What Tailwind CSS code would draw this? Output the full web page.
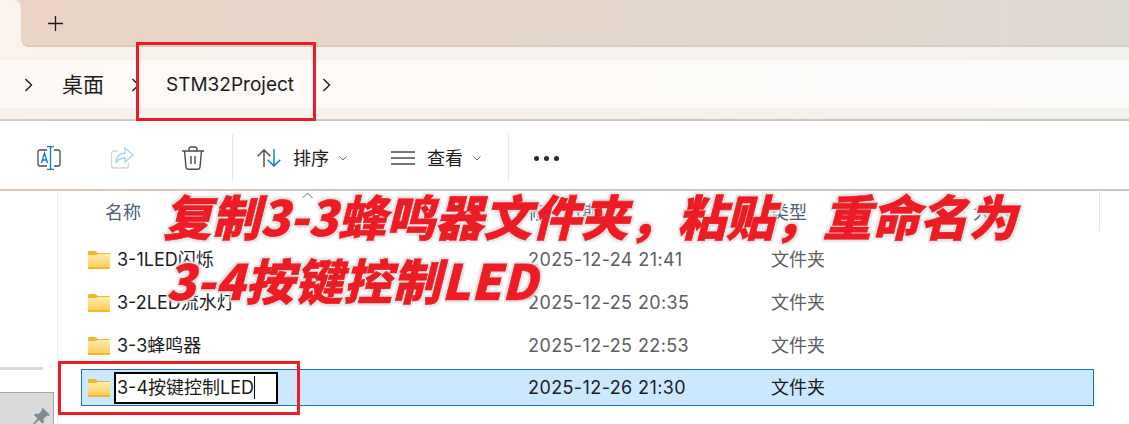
<!DOCTYPE html>
<html lang="zh-CN">
<head>
  <meta charset="UTF-8">
  <title>STM32Project</title>
  <script src="https://cdn.jsdelivr.net/npm/@tailwindcss/browser@4"></script>
</head>
<body class="bg-white overflow-hidden font-['Inter','Noto_Sans_CJK_SC',sans-serif]">
  <div class="relative w-[1129px] h-[424px] overflow-hidden text-[#1c1c1c]">

    <!-- tab strip -->
    <div class="h-[60px] bg-gradient-to-r from-[#f9f2ed] to-[#f3f1ee] flex items-start">
      <div class="w-[21px] h-2 bg-[#ecd6c7]">
        <div class="h-full bg-[#f9f2ed] rounded-tr-lg"></div>
      </div>
      <div class="flex-1 h-[47px] rounded-bl-lg bg-gradient-to-r from-[#ebd4c4] to-[#dfd9d3] border-b-2 border-black/5 pl-[27px] pt-4">
        <svg class="w-[15px] h-[15px]" viewBox="0 0 15 15" fill="none" stroke="#1c1c1c" stroke-width="1.3"><path d="M7.500 0v15M0 7.500h15"/></svg>
      </div>
    </div>

    <!-- address bar -->
    <div class="h-[61px] bg-gradient-to-r from-[#f9f2ed] to-[#f3f1ee] border-b-2 [border-image:linear-gradient(to_right,#d9c8bb,#c8c6c2)_1]">
      <div class="h-12 pt-[2px] bg-gradient-to-r from-[#fdf9f6] to-[#fcfbf9] flex items-center text-[19px]">
        <svg class="w-[9px] h-[14px] ml-[24px]" viewBox="0 0 9 14" fill="none" stroke="#1c1c1c" stroke-width="1.4"><path d="M1.500 1l6 6-6 6"/></svg>
        <span class="ml-[29px] w-[42px] text-[21px] whitespace-nowrap">桌面</span>
        <svg class="w-[9px] h-[14px] ml-[27px]" viewBox="0 0 9 14" fill="none" stroke="#1c1c1c" stroke-width="1.4"><path d="M1.500 1l6 6-6 6"/></svg>
        <span class="ml-[26px] w-[128px] whitespace-nowrap">STM32Project</span>
        <svg class="w-[9px] h-[14px] ml-[28px]" viewBox="0 0 9 14" fill="none" stroke="#1c1c1c" stroke-width="1.4"><path d="M1.500 1l6 6-6 6"/></svg>
      </div>
    </div>

    <!-- command bar -->
    <div class="h-[70px] pt-[6px] border-b-2 [border-image:linear-gradient(to_right,#d9c8bb,#c6c6c4)_1] flex items-center text-[18px]">
      <svg class="w-6 h-6 ml-[37px]" viewBox="0 0 24 24" fill="none" stroke-width="1.300">
        <path d="M10 4H3a2 2 0 0 0-2 2v12a2 2 0 0 0 2 2h7M17 4h4a2 2 0 0 1 2 2v12a2 2 0 0 1-2 2h-4" stroke="#4a4a4a"/>
        <path d="M10 .7h7M13.500 .7v22.600M10 23.300h7M4.500 17l3-10 3 10M5.500 14h4" stroke="#0a78d4"/>
      </svg>
      <svg class="w-6 h-6 ml-[49px]" viewBox="0 0 24 24" fill="none" stroke-width="1.300">
        <path d="M8 5H4a2.500 2.500 0 0 0-2.500 2.500v12A2.500 2.500 0 0 0 4 22h12a2.500 2.500 0 0 0 2.500-2.500V17" stroke="#d6d6d6"/>
        <path d="M15 2l8 7-8 7v-4c-4 0-7 1-9 5 0-6 3-9.500 9-10z" stroke="#a6d2f4"/>
      </svg>
      <svg class="w-[22px] h-6 ml-[48px]" viewBox="0 0 22 24" fill="none" stroke="#4a4a4a" stroke-width="1.400">
        <path d="M0 5h22M7 5V3a2 2 0 0 1 2-2h4a2 2 0 0 1 2 2v2M2.500 5l1.500 16a2.500 2.500 0 0 0 2.500 2.300h9A2.500 2.500 0 0 0 18 21l1.500-16M9 10v8M13 10v8"/>
      </svg>
      <div class="ml-[28px] w-px h-12 bg-[#e8e8e8]"></div>
      <svg class="w-6 h-[18px] ml-[24px]" viewBox="0 0 24 18" fill="none" stroke-width="1.400">
        <path d="M7 18V1M.7 7.300L7 1l6.300 6.300" stroke="#4a4a4a"/>
        <path d="M17 0v17M10.700 10.700L17 17l6.300-6.300" stroke="#0a78d4"/>
      </svg>
      <span class="ml-3">排序</span>
      <svg class="w-2 h-2 ml-[10px]" viewBox="0 0 8 8" fill="none" stroke="#6a6a6a"><path d="M.5 2.500L4 6l3.500-3.500"/></svg>
      <svg class="w-6 h-[14px] ml-[44px]" viewBox="0 0 24 14" fill="none" stroke="#4a4a4a" stroke-width="1.400"><path d="M0 1h24M0 7h24M0 13h24"/></svg>
      <span class="ml-3">查看</span>
      <svg class="w-2 h-2 ml-[10px]" viewBox="0 0 8 8" fill="none" stroke="#6a6a6a"><path d="M.5 2.500L4 6l3.500-3.500"/></svg>
      <div class="ml-[27px] w-px h-12 bg-[#e8e8e8]"></div>
      <div class="ml-[25px] flex gap-[5px]">
        <span class="w-[5px] h-[5px] rounded-full bg-[#2a2a2a]"></span>
        <span class="w-[5px] h-[5px] rounded-full bg-[#2a2a2a]"></span>
        <span class="w-[5px] h-[5px] rounded-full bg-[#2a2a2a]"></span>
      </div>
    </div>

    <!-- body -->
    <div class="flex h-[233px]">
      <aside class="w-[58px] shrink-0 border-r border-[#efefef] flex flex-col">
        <div class="mt-[176px] h-[3px] w-[43px] bg-[#d9d9d9]"></div>
        <div class="mt-[22px] h-8 w-[54px] bg-[#dadada] border-t border-r border-[#a4a4a4] flex items-start justify-end pr-[3px] pt-[15px] overflow-hidden">
          <svg class="w-[18px] h-[18px] shrink-0" viewBox="0 0 18 18" fill="#7f8a96"><path d="M11 0l7 7-1.500 1-1.500-.5-3.500 3.500.5 3-1.500 1.500-3.500-3.500L1 18l-1-1 5.500-6.500L2 7l1.500-1.500 3 .5L10 2.500 9.500 1z"/></svg>
        </div>
      </aside>

      <main class="flex-1 min-w-0">
        <!-- column headers -->
        <div class="relative h-[47px] text-[18px] text-[#4c607a]">
          <svg class="absolute left-[244px] top-[1px] w-[11px] h-[7px]" viewBox="0 0 11 7" fill="none" stroke="#6a6a6a"><path d="M.5 6L5.500 1l5 5"/></svg>
          <span class="absolute left-[47px] top-[8px]">名称</span>
          <span class="absolute left-[470px] top-[8px]">修改日期</span>
          <span class="absolute left-[713px] top-[8px]">类型</span>
          <span class="absolute left-[915px] top-[8px]">大小</span>
          <span class="absolute left-[704px] top-0 w-px h-[40px] bg-[#e5e5e5]"></span>
          <span class="absolute left-[906px] top-0 w-px h-[40px] bg-[#e5e5e5]"></span>
          <span class="absolute left-[1041px] top-0 w-px h-[40px] bg-[#e5e5e5]"></span>
        </div>

        <!-- rows -->
        <div class="flex items-center h-[43px] pl-[30px] text-[18px]">
          <svg class="w-[22px] h-[18px] shrink-0" viewBox="0 0 22 18"><defs><linearGradient id="folderFront" x1="0" y1="0" x2="0" y2="1"><stop offset="0" stop-color="#ffecae"/><stop offset="1" stop-color="#fbcf5c"/></linearGradient></defs><path d="M0 1a1 1 0 0 1 1-1h6l3 2h11a1 1 0 0 1 1 1v14a1 1 0 0 1-1 1H1a1 1 0 0 1-1-1z" fill="#f2b52c"/><path d="M0 4h8l2-1h12v13H0z" fill="url(#folderFront)"/></svg>
          <span class="ml-[7px] w-[411px] whitespace-nowrap">3-1LED闪烁</span>
          <span class="w-[243px] text-[#5d5d5d] tracking-[.4px] whitespace-nowrap">2025-12-24 21:41</span>
          <span class="text-[#5d5d5d]">文件夹</span>
        </div>
        <div class="flex items-center h-[43px] pl-[30px] text-[18px]">
          <svg class="w-[22px] h-[18px] shrink-0" viewBox="0 0 22 18"><path d="M0 1a1 1 0 0 1 1-1h6l3 2h11a1 1 0 0 1 1 1v14a1 1 0 0 1-1 1H1a1 1 0 0 1-1-1z" fill="#f2b52c"/><path d="M0 4h8l2-1h12v13H0z" fill="url(#folderFront)"/></svg>
          <span class="ml-[7px] w-[411px] whitespace-nowrap">3-2LED流水灯</span>
          <span class="w-[243px] text-[#5d5d5d] tracking-[.4px] whitespace-nowrap">2025-12-25 20:35</span>
          <span class="text-[#5d5d5d]">文件夹</span>
        </div>
        <div class="flex items-center h-[43px] pl-[30px] text-[18px]">
          <svg class="w-[22px] h-[18px] shrink-0" viewBox="0 0 22 18"><path d="M0 1a1 1 0 0 1 1-1h6l3 2h11a1 1 0 0 1 1 1v14a1 1 0 0 1-1 1H1a1 1 0 0 1-1-1z" fill="#f2b52c"/><path d="M0 4h8l2-1h12v13H0z" fill="url(#folderFront)"/></svg>
          <span class="ml-[7px] w-[411px] whitespace-nowrap">3-3蜂鸣器</span>
          <span class="w-[243px] text-[#5d5d5d] tracking-[.4px] whitespace-nowrap">2025-12-25 22:53</span>
          <span class="text-[#5d5d5d]">文件夹</span>
        </div>
        <div class="flex items-center h-[37px] mt-[2px] ml-[23px] w-[1013px] pl-[6px] text-[18px] bg-[#cce8ff] border border-[#1b6fb8]">
          <svg class="w-[22px] h-[18px] shrink-0" viewBox="0 0 22 18"><path d="M0 1a1 1 0 0 1 1-1h6l3 2h11a1 1 0 0 1 1 1v14a1 1 0 0 1-1 1H1a1 1 0 0 1-1-1z" fill="#f2b52c"/><path d="M0 4h8l2-1h12v13H0z" fill="url(#folderFront)"/></svg>
          <div class="ml-1 w-[164px] h-[32px] bg-white border-2 border-black flex items-center pl-[1px] shrink-0 whitespace-nowrap">3-4按键控制LED<span class="w-px h-[23px] bg-black"></span></div>
          <span class="ml-[250px] w-[243px] tracking-[.4px] whitespace-nowrap">2025-12-26 21:30</span>
          <span>文件夹</span>
        </div>
      </main>
    </div>

    <!-- red highlight boxes -->
    <div class="absolute left-[136px] top-[42px] w-[180px] h-[79px] border-[3px] border-[#ed1c24]"></div>
    <div class="absolute left-[58px] top-[361px] w-[242px] h-[54px] border-[3px] border-[#ed1c24]"></div>

    <!-- annotation -->
    <div class="absolute left-[163px] top-[188px] text-[48.5px] leading-[54px] font-black italic text-[#ed1c24] whitespace-nowrap [-webkit-text-stroke:.6px_#ed1c24] [text-shadow:0_0_3px_#fff,2px_2px_2px_#ddd,-2px_-2px_2px_#ddd,2px_-2px_2px_#ddd,-2px_2px_2px_#ddd] font-['Noto_Sans_CJK_SC',sans-serif]">复制3-3蜂鸣器文件夹，粘贴，重命名为</div>
    <div class="absolute left-[166px] top-[252px] text-[48.5px] leading-[54px] font-black italic tracking-[.5px] text-[#ed1c24] whitespace-nowrap [-webkit-text-stroke:.6px_#ed1c24] [text-shadow:0_0_3px_#fff,2px_2px_2px_#ddd,-2px_-2px_2px_#ddd,2px_-2px_2px_#ddd,-2px_2px_2px_#ddd] font-['Noto_Sans_CJK_SC',sans-serif]">3-4按键控制LED</div>
  </div>
</body>
</html>
